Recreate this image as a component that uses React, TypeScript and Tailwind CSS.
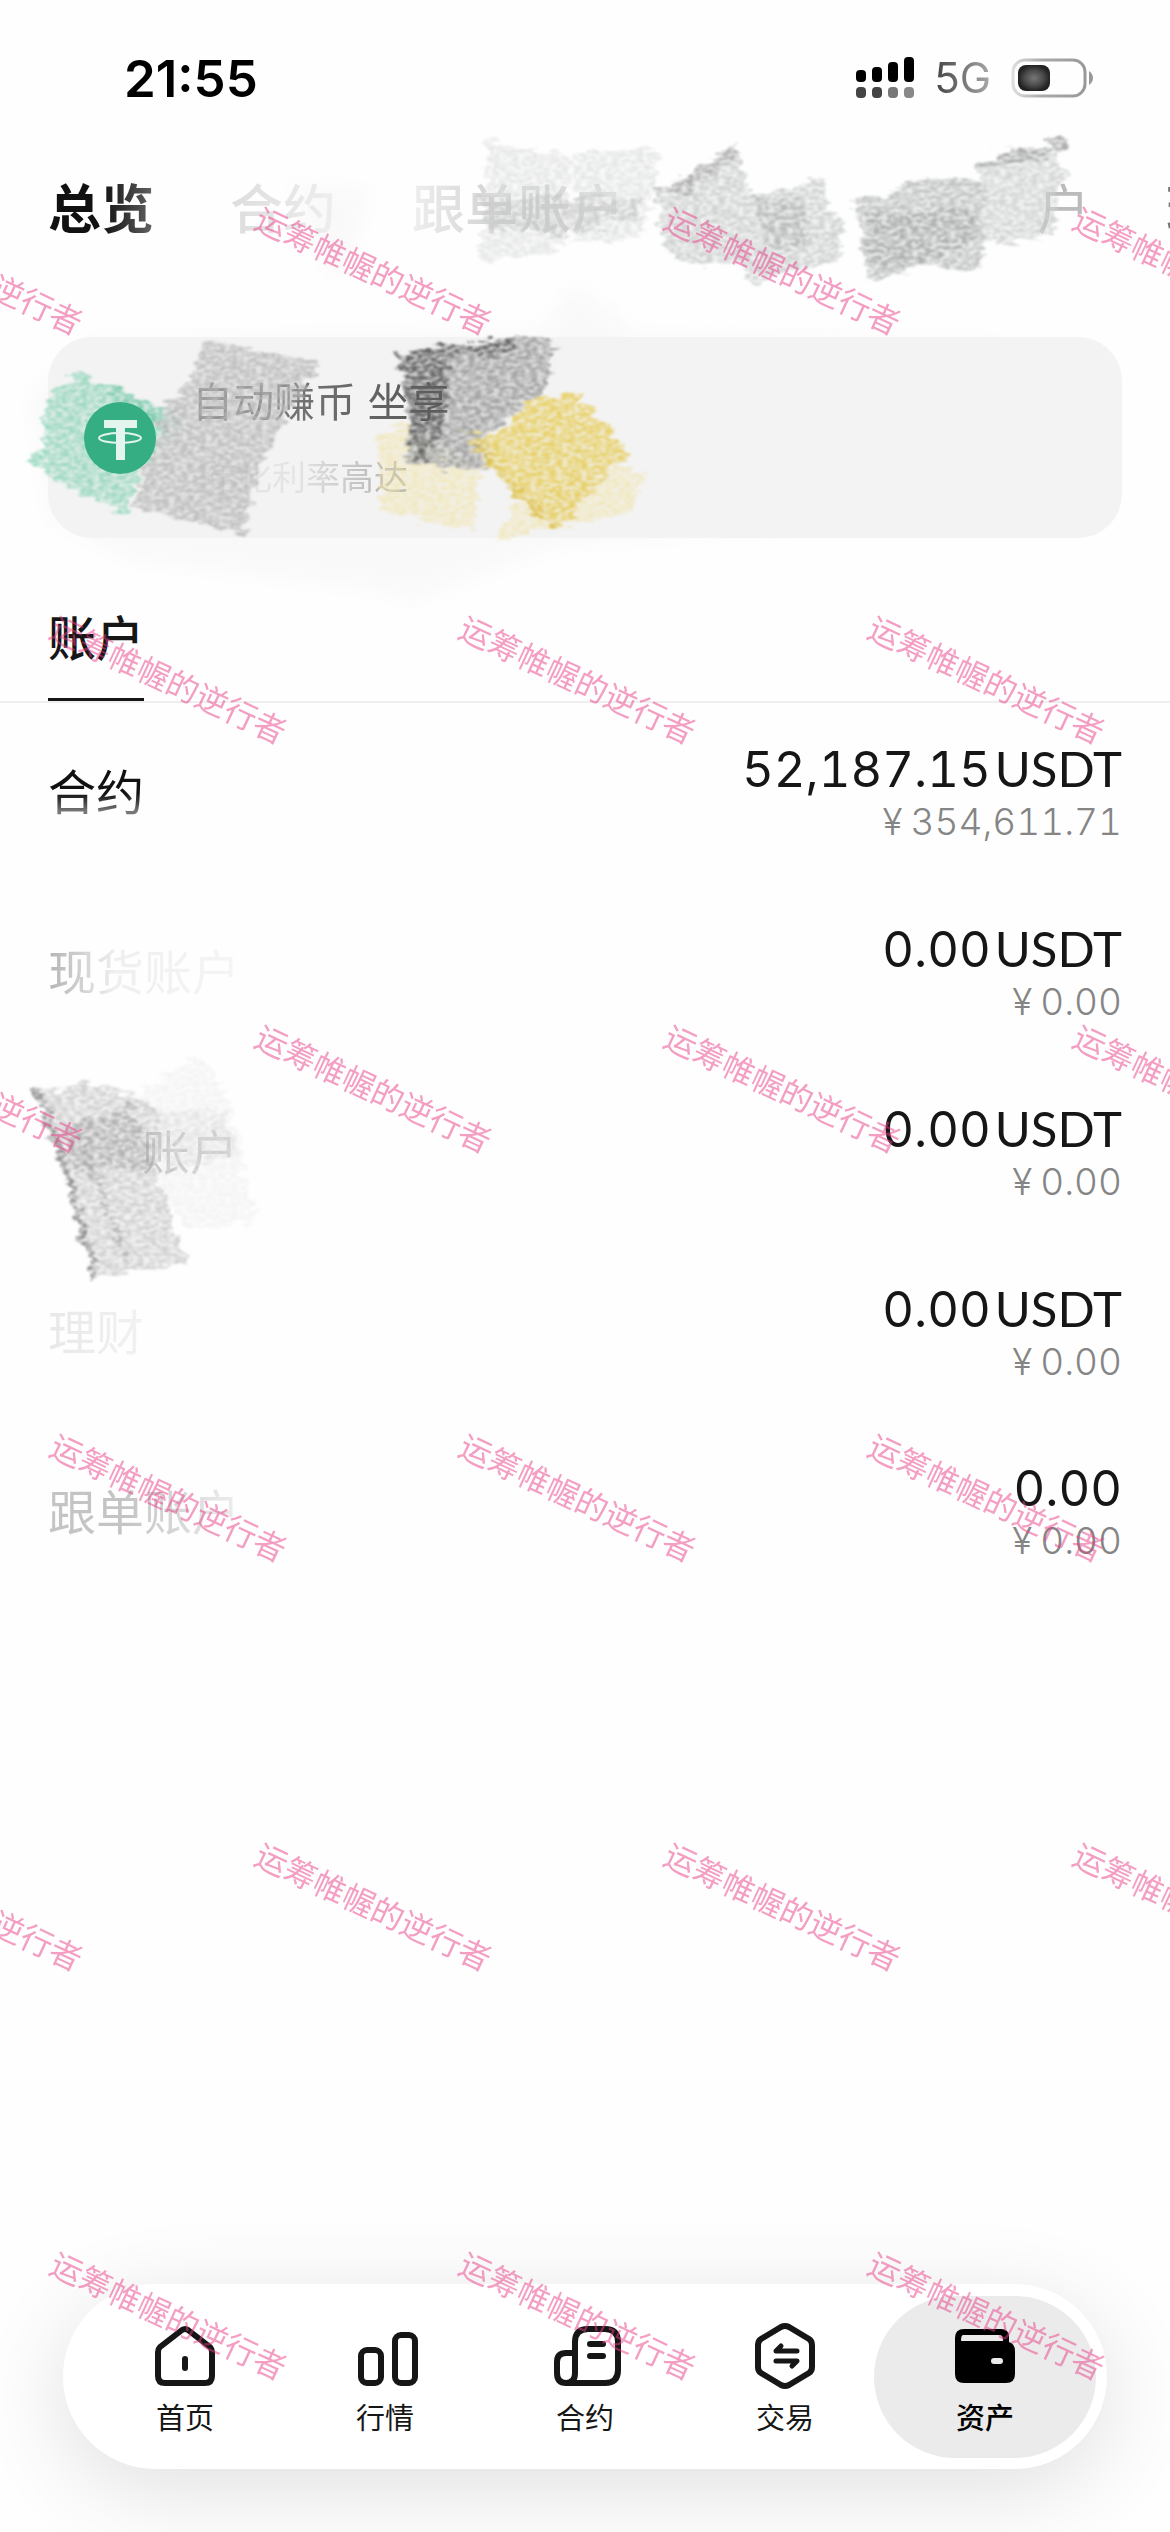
import type { ReactNode } from "react";

const tabs = [
  { label: "总览", look: "font-bold bg-linear-to-r from-[#111] from-50% to-[#666]" },
  { label: "合约", look: "font-medium bg-linear-to-r from-[#ddd] to-[#eee]" },
  { label: "跟单账户", look: "font-medium bg-linear-to-r from-[#eee] via-[#ccc] to-[#ddd]" },
];

const accounts = [
  { label: "合约", amount: "52,187.15", unit: "USDT", fiat: "354,611.71", look: "bg-linear-to-b from-[#111] from-50% to-[#777] to-80%" },
  { label: "现货账户", amount: "0.00", unit: "USDT", fiat: "0.00", look: "bg-linear-to-r from-[#b4b4b4] via-[#efefef] via-35% to-[#f5f5f5]" },
  { label: "账户", amount: "0.00", unit: "USDT", fiat: "0.00", look: "pl-[94px] bg-linear-to-r from-[#999] via-[#bbb] to-[#ccc]" },
  { label: "理财", amount: "0.00", unit: "USDT", fiat: "0.00", look: "bg-linear-to-r from-[#e8e8e8] to-[#f2f2f2]" },
  { label: "跟单账户", amount: "0.00", unit: "", fiat: "0.00", look: "bg-linear-to-r from-[#c4c4c4] from-40% to-[#eee]" },
];

function NavIcon({ children }: { children: ReactNode }) {
  return (
    <svg viewBox="0 0 72 72" className="size-[72px] overflow-visible" fill="none" stroke="#161616" strokeWidth="6" strokeLinecap="round" strokeLinejoin="round" aria-hidden="true">
      {children}
    </svg>
  );
}

const navItems: { label: string; icon: ReactNode }[] = [
  {
    label: "首页",
    icon: (
      <NavIcon>
        <path d="M9 33Q9 30 11 28L33 11Q36 9 39 11L61 28Q63 30 63 33V57Q63 64 56 64H16Q9 64 9 57Z" />
        <path d="M36 40V49" />
      </NavIcon>
    ),
  },
  {
    label: "行情",
    icon: (
      <NavIcon>
        <rect x="12" y="31" width="20" height="33" rx="6" />
        <rect x="46" y="16" width="20" height="48" rx="6" />
      </NavIcon>
    ),
  },
  {
    label: "合约",
    icon: (
      <NavIcon>
        <path d="M17 64H56Q69 64 69 51V23Q69 10 56 10H39Q26 10 26 23V54Q26 64 17 64Q8 64 8 54V43Q8 34 17 34H26" />
        <path d="M41 25H54M41 37H54" />
      </NavIcon>
    ),
  },
  {
    label: "交易",
    icon: (
      <NavIcon>
        <path d="M32 8Q36 6 40 8L60 20Q63 22 63 26V48Q63 52 60 54L40 66Q36 68 32 66L12 54Q9 52 9 48V26Q9 22 12 20Z" />
        <path d="M48 32H27L32 27M27 42H48L43 47" strokeWidth="5" />
      </NavIcon>
    ),
  },
  {
    label: "资产",
    icon: (
      <NavIcon>
        <path fill="#000" stroke="none" d="M15 10H52Q60 10 60 18V23Q66 25 66 32V55Q66 64 57 64H15Q6 64 6 55V19Q6 10 15 10Z" />
        <path stroke="none" fill="#ebebeb" d="M14 16H51Q54 16 54 22H12Q12 16 14 16Z" />
        <rect x="42" y="39" width="12" height="6" rx="3" fill="#ebebeb" stroke="none" />
      </NavIcon>
    ),
  },
];

function StatusBar() {
  return (
    <header className="flex h-[156px] items-center justify-between pl-[124px] pr-[75px]">
      <time className="text-[51px] font-semibold leading-none text-black">21:55</time>
      <div className="flex items-center gap-5">
        <svg viewBox="0 0 58 42" className="h-[42px] w-[58px]" aria-label="信号">
          <g fill="#000">
            <rect x="0" y="13" width="10" height="12" rx="4" />
            <rect x="16" y="10" width="10" height="15" rx="4" />
            <rect x="32" y="5" width="10" height="20" rx="4" />
            <rect x="48" y="0" width="10" height="25" rx="4" />
          </g>
          <g fill="#444">
            <rect x="0" y="30" width="10" height="11" rx="4" />
            <rect x="16" y="30" width="10" height="11" rx="4" />
            <rect x="32" y="30" width="10" height="11" rx="4" fill="#777" />
            <rect x="48" y="30" width="10" height="11" rx="4" fill="#888" />
          </g>
        </svg>
        <span className="bg-linear-to-r from-[#444] to-[#aaa] bg-clip-text text-[42px] leading-none text-transparent">5G</span>
        <svg viewBox="0 0 84 40" className="h-10 w-[84px]" aria-label="电量">
          <defs>
            <linearGradient id="shell" x1="0" x2="1">
              <stop offset="0" stopColor="#ddd" />
              <stop offset=".4" stopColor="#aaa" />
              <stop offset="1" stopColor="#999" />
            </linearGradient>
            <radialGradient id="charge">
              <stop offset="0" stopColor="#777" />
              <stop offset=".6" stopColor="#4a4a4a" />
              <stop offset="1" stopColor="#222" />
            </radialGradient>
          </defs>
          <rect x="2" y="2" width="72" height="36" rx="12" fill="none" stroke="url(#shell)" strokeWidth="3" />
          <rect x="7" y="7" width="32" height="26" rx="8" fill="url(#charge)" />
          <path d="M78 13Q82 16 82 20Q82 24 78 27Z" fill="#999" />
        </svg>
      </div>
    </header>
  );
}

function Haze() {
  return (
    <svg viewBox="0 0 1170 700" className="pointer-events-none absolute left-0 top-0 h-[700px] w-[1170px]" aria-hidden="true">
      <filter id="soft">
        <feGaussianBlur stdDeviation="9" />
      </filter>
      <g fill="#f9f9f9" filter="url(#soft)">
        <path d="M30 400L90 340L540 330L575 285L640 335L1000 340L900 520L560 545L410 602L380 590L130 560L50 520Z" />
        <path d="M290 185L370 190L350 270L330 275Z" />
      </g>
    </svg>
  );
}

function Crayon() {
  return (
    <svg viewBox="0 0 1170 1300" className="pointer-events-none absolute left-0 top-0 h-[1300px] w-[1170px]" aria-hidden="true">
      <defs>
        <filter id="grain" x="-5%" y="-5%" width="110%" height="110%">
          <feTurbulence type="fractalNoise" baseFrequency="0.16 0.3" numOctaves="4" seed="4" result="noise" />
          <feColorMatrix in="noise" type="matrix" values="0 0 0 0 0  0 0 0 0 0  0 0 0 0 0  3 0 0 0 -0.95" result="specks" />
          <feTurbulence type="fractalNoise" baseFrequency="0.04 0.14" numOctaves="3" seed="9" result="wave" />
          <feDisplacementMap in="SourceGraphic" in2="wave" scale="22" xChannelSelector="R" yChannelSelector="G" result="rough" />
          <feComposite in="rough" in2="specks" operator="in" result="dots" />
          <feComponentTransfer in="rough" result="wash">
            <feFuncA type="linear" slope="0.28" />
          </feComponentTransfer>
          <feMerge result="drawn">
            <feMergeNode in="wash" />
            <feMergeNode in="dots" />
          </feMerge>
          <feGaussianBlur in="drawn" stdDeviation="0.8" />
        </filter>
      </defs>
      <g filter="url(#grain)">
        <g fill="#dfe1e0" opacity=".7">
          <path d="M488 142L570 155L568 250L480 262Z" />
          <path d="M572 155L663 148L655 185L640 240L575 240Z" />
        </g>
        <path d="M478 200L640 198L640 218L566 234L485 228Z" fill="#c4c6c5" opacity=".7" />
        <path d="M655 193L735 146L745 173L750 196L825 180L827 210L842 220L837 260L750 282L740 262L700 266L664 250Z" fill="#c8cbca" opacity=".8" />
        <path d="M652 195L738 144L741 154L690 190Z" fill="#9fa1a0" opacity=".7" />
        <path d="M755 200L800 198L810 245L770 250Z" fill="#a9acab" opacity=".6" />
        <path d="M850 202L930 178L983 180L987 240L982 267L913 268L867 283L865 262L860 215Z" fill="#c2c4c4" />
        <path d="M866 212L975 208L980 232L915 266L870 268Z" fill="#a2a4a4" opacity=".6" />
        <path d="M975 162L1065 142L1058 162L1067 177L1057 200L1053 233L987 247L980 185Z" fill="#cfd1d0" opacity=".85" />
        <path d="M975 160L1065 138L1065 150L980 170Z" fill="#9c9e9d" opacity=".75" />
      </g>
      <g filter="url(#grain)">
        <path d="M79 373L178 417L184 430L147 463L134 492L126 515L26 463L43 443L43 400Z" fill="#8ed4b9" opacity=".8" />
        <path d="M79 373L178 415L186 432L160 432L110 398Z" fill="#62c09c" opacity=".5" />
        <path d="M204 343L319 362L310 380L278 433L260 467L247 513L245 537L134 507L147 467L165 407L186 387Z" fill="#b8b8b8" opacity=".85" />
        <path d="M377 433L412 423L480 470L473 532L382 513Z" fill="#f0e2a8" opacity=".6" />
        <path d="M494 540L633 513L645 470L600 470L520 500Z" fill="#f0e2a8" opacity=".6" />
        <path d="M397 352L516 337L555 343L546 387L490 433L490 470L401 463L412 427Z" fill="#9a9a9a" opacity=".85" />
        <path d="M397 352L516 337L514 350L450 358L446 410L430 460L412 458L410 427Z" fill="#4c4c4c" opacity=".7" />
        <path d="M533 397L577 393L632 458L603 473L590 500L551 530L465 438L500 432Z" fill="#e6cc5c" opacity=".85" />
        <path d="M470 442L553 526" stroke="#d9b93c" strokeWidth="8" opacity=".6" />
      </g>
      <g filter="url(#grain)">
        <path d="M143 1087L203 1057L230 1100L255 1223L190 1227L160 1200Z" fill="#eeeeee" opacity=".55" />
        <path d="M150 1110L225 1110L235 1160L165 1170Z" fill="#d3d3d3" opacity=".4" />
        <path d="M33 1092L82 1083L117 1090L147 1100L160 1120L158 1187L186 1262L143 1270L93 1275L63 1180L50 1133Z" fill="#c4c4c4" opacity=".7" />
        <path d="M60 1130L130 1105L155 1165L75 1170Z" fill="#969696" opacity=".5" />
        <path d="M38 1092L66 1170L94 1276" stroke="#8a8a8a" strokeWidth="8" fill="none" opacity=".85" />
        <path d="M80 1130L126 1262" stroke="#a0a0a0" strokeWidth="6" fill="none" opacity=".6" />
      </g>
    </svg>
  );
}

function TetherLogo() {
  return (
    <svg viewBox="0 0 72 72" className="relative z-10 size-[72px]" aria-label="USDT">
      <circle cx="36" cy="36" r="36" fill="#35ae83" />
      <path d="M20 18H53V26H41V58H32V26H20Z" fill="#e3f5ee" />
      <ellipse cx="36" cy="36" rx="21" ry="5" fill="none" stroke="#e3f5ee" strokeWidth="2" />
    </svg>
  );
}

function Watermark() {
  return (
    <div className="pointer-events-none absolute inset-0 z-20 overflow-hidden pt-[67px]" aria-hidden="true">
      {[0, 1, 2, 3, 4, 5].map((row) => (
        <div key={row} className={row % 2 === 0 ? "-ml-[240px] flex h-[409px]" : "-ml-[36px] flex h-[409px]"}>
          {[0, 1, 2, 3].map((cell) => (
            <div key={cell} className="flex w-[409px] shrink-0 items-center justify-center">
              <span className="rotate-25 whitespace-nowrap text-[32px] leading-none text-[#ea3d87]/50">运筹帷幄的逆行者</span>
            </div>
          ))}
        </div>
      ))}
    </div>
  );
}

export default function App() {
  return (
    <div className="relative flex min-h-screen flex-col overflow-hidden bg-[#fefefe] font-['Inter','Noto_Sans_CJK_SC',sans-serif] text-[#161616]">
      <Haze />
      <StatusBar />

      <div className="relative flex h-[108px] items-center gap-[76px] whitespace-nowrap px-12 text-[53px] leading-[64px]">
        {tabs.map((tab) => (
          <button key={tab.label} className={`shrink-0 bg-clip-text text-transparent ${tab.look}`}>
            {tab.label}
          </button>
        ))}
        <button className="ml-auto shrink-0 text-[#bbb]">户</button>
        <button className="-mr-[150px] shrink-0 font-medium text-[#777]">理财</button>
      </div>

      <section className="relative mx-12 mt-[73px] flex h-[201px] items-center gap-9 rounded-[44px] bg-[#f3f3f3] px-9">
        <TetherLogo />
        <div className="flex flex-col gap-7 whitespace-nowrap">
          <h2 className="bg-linear-to-r from-[#888] to-[#555] bg-clip-text text-[41px] leading-[52px] text-transparent">自动赚币 坐享</h2>
          <p className="bg-linear-to-r from-[#e4e4e4] from-40% to-[#999] bg-clip-text pl-3 text-[34px] leading-[44px] text-transparent">年化利率高达</p>
        </div>
      </section>

      <div className="relative mt-[58px] flex h-[107px] border-b-2 border-[#efefef] px-12">
        <button className="flex h-[105px] items-center border-b-3 border-[#161616] pb-4 text-[48px] font-medium leading-[56px]">账户</button>
      </div>

      <ul className="relative">
        {accounts.map((account, index) => (
          <li key={index} className="flex h-[180px] items-center justify-between px-12">
            <span className={`bg-clip-text text-[48px] leading-[60px] text-transparent ${account.look}`}>{account.label}</span>
            <div className="flex flex-col items-end">
              <div className="flex items-baseline gap-1 text-[49px] leading-[56px]">
                <span className="tabular-nums">{account.amount}</span>
                {account.unit && <span className="font-['Lato']">{account.unit}</span>}
              </div>
              <div className="flex gap-2 text-[37px] font-light leading-[48px] text-[#858585]">
                <span>¥</span>
                <span className="tabular-nums">{account.fiat}</span>
              </div>
            </div>
          </li>
        ))}
      </ul>

      <Crayon />

      <nav className="relative mx-[63px] mb-[63px] mt-auto flex h-[185px] items-center rounded-full bg-white px-[22px] shadow-[0_20px_90px_rgba(0,0,0,0.12)]">
        {navItems.map((item, index) => (
          <a
            key={item.label}
            href="#"
            aria-current={index === 4 ? "page" : undefined}
            className={
              index === 4
                ? "-mx-[11px] flex h-[162px] flex-[222_1_0] flex-col items-center justify-center gap-2 rounded-full bg-[#ebebeb] pt-1 font-medium text-black"
                : "flex h-[162px] flex-[200_1_0] flex-col items-center justify-center gap-2 pt-1"
            }
          >
            {item.icon}
            <span className="text-[29px] leading-10">{item.label}</span>
          </a>
        ))}
      </nav>

      <Watermark />
    </div>
  );
}
